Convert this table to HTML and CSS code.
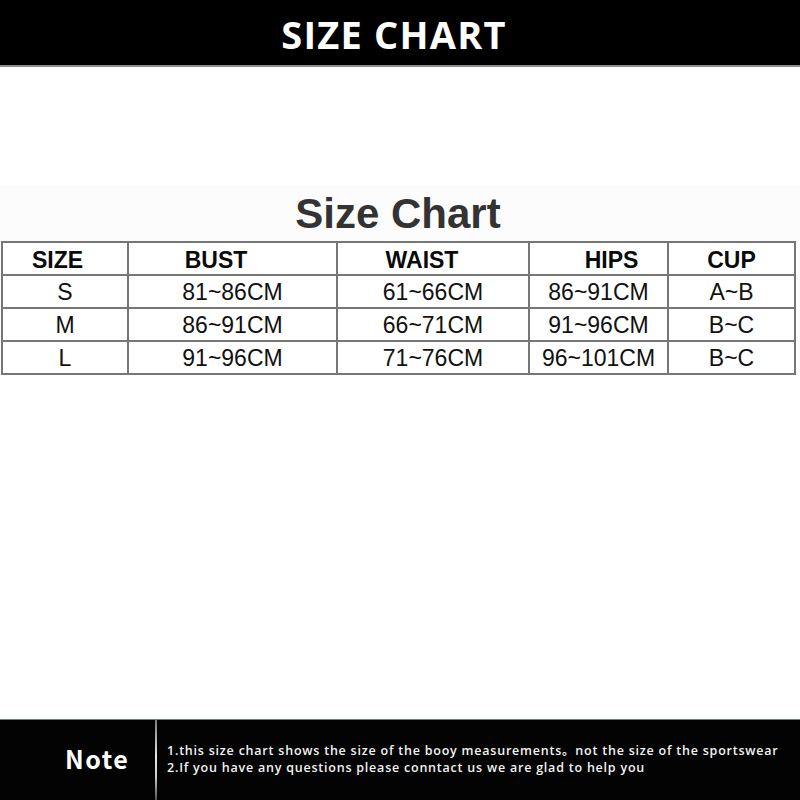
FILE: index.html
```html
<!DOCTYPE html>
<html lang="en">
<head>
<meta charset="utf-8">
<title>Size Chart</title>
<link rel="stylesheet" href="styles.css">
</head>
<body>
<div class="page">
  <header class="topbar">
    <h1 class="topbar-title">SIZE CHART</h1>
  </header>
  <main class="main">
    <section class="chart">
      <h2 class="chart-title">Size Chart</h2>
      <table class="size-table">
        <colgroup>
          <col class="c-size">
          <col class="c-bust">
          <col class="c-waist">
          <col class="c-hips">
          <col class="c-cup">
        </colgroup>
        <thead>
          <tr>
            <th class="h-size">SIZE</th>
            <th class="h-bust">BUST</th>
            <th class="h-waist">WAIST</th>
            <th class="h-hips">HIPS</th>
            <th class="h-cup">CUP</th>
          </tr>
        </thead>
        <tbody>
          <tr><td>S</td><td>81~86CM</td><td>61~66CM</td><td>86~91CM</td><td>A~B</td></tr>
          <tr><td>M</td><td>86~91CM</td><td>66~71CM</td><td>91~96CM</td><td>B~C</td></tr>
          <tr><td>L</td><td>91~96CM</td><td>71~76CM</td><td>96~101CM</td><td>B~C</td></tr>
        </tbody>
      </table>
    </section>
  </main>
  <footer class="notebar">
    <div class="note-label">Note</div>
    <div class="note-divider"></div>
    <div class="note-text">
      <p>1.this size chart shows the size of the booy measurements。not the size of the sportswear</p>
      <p>2.If you have any questions please conntact us we are glad to help you</p>
    </div>
  </footer>
</div>
</body>
</html>
```

FILE: styles.css
```css
* { box-sizing: border-box; }
html, body { margin: 0; padding: 0; background: #ffffff; }

.page {
  width: 800px;
  height: 800px;
  display: flex;
  flex-direction: column;
  overflow: hidden;
}

.topbar {
  height: 67px;
  flex: 0 0 67px;
  background: #000;
  border-bottom: 2px solid #8c8c8c;
  display: flex;
  align-items: center;
  justify-content: center;
  padding-top: 3px;
}
.topbar-title {
  margin: 0;
  padding-right: 12px;
  color: #fff;
  font-family: "Open Sans", "Liberation Sans", sans-serif;
  font-weight: 700;
  font-size: 38px;
  letter-spacing: 1.2px;
  line-height: 1;
}

.main {
  flex: 1 1 auto;
  padding-top: 118px;
}

.chart {
  background: #fcfcfc;
  padding-top: 4px;
}
.chart-title {
  margin: 0 0 2px 0;
  text-align: center;
  font-family: "Liberation Sans", Arial, sans-serif;
  font-weight: 700;
  font-size: 42px;
  line-height: 50px;
  color: #333;
  padding-right: 4px;
}

.size-table {
  margin-left: 1px;
  width: 793px;
  table-layout: fixed;
  border-collapse: collapse;
  font-family: "Liberation Sans", Arial, sans-serif;
  color: #111;
  background: #fff;
}
.c-size { width: 126px; }
.c-bust { width: 209px; }
.c-waist { width: 192px; }
.c-hips { width: 139px; }
.c-cup { width: 127px; }

.size-table th,
.size-table td {
  border: 2px solid #767676;
  height: 33px;
  padding: 0;
  text-align: center;
  vertical-align: middle;
  font-size: 23px;
  line-height: 1;
}
.size-table th { font-weight: 700; color: #0a0a0a; padding-top: 3px; }
.size-table td { font-weight: 400; padding-top: 1px; }

.size-table .h-size { padding-right: 15px; }
.size-table .h-bust { padding-right: 33px; }
.size-table .h-waist { padding-right: 22px; }
.size-table .h-hips { padding-left: 26px; }

.notebar {
  height: 81px;
  flex: 0 0 81px;
  background: #030303;
  border-top: 1px solid #6f7d7d;
  display: flex;
  align-items: stretch;
  color: #fff;
}
.note-label {
  width: 155px;
  padding-left: 65px;
  padding-bottom: 4px;
  display: flex;
  align-items: center;
  font-family: "Noto Sans CJK SC", "Open Sans", sans-serif;
  font-weight: 700;
  font-size: 25px;
  letter-spacing: 1.5px;
}
.note-divider {
  width: 2px;
  background: linear-gradient(to bottom, #7a7a7a, #e6e6e6 45%, #cfcfcf 70%, #555);
}
.note-text {
  padding-left: 10px;
  padding-top: 22px;
  font-family: "Open Sans", "Noto Sans CJK SC", sans-serif;
  font-weight: 600;
  font-size: 12.5px;
  letter-spacing: 0.78px;
  line-height: 17px;
  color: #f2f2f2;
}
.note-text p { margin: 0; white-space: nowrap; }
```
